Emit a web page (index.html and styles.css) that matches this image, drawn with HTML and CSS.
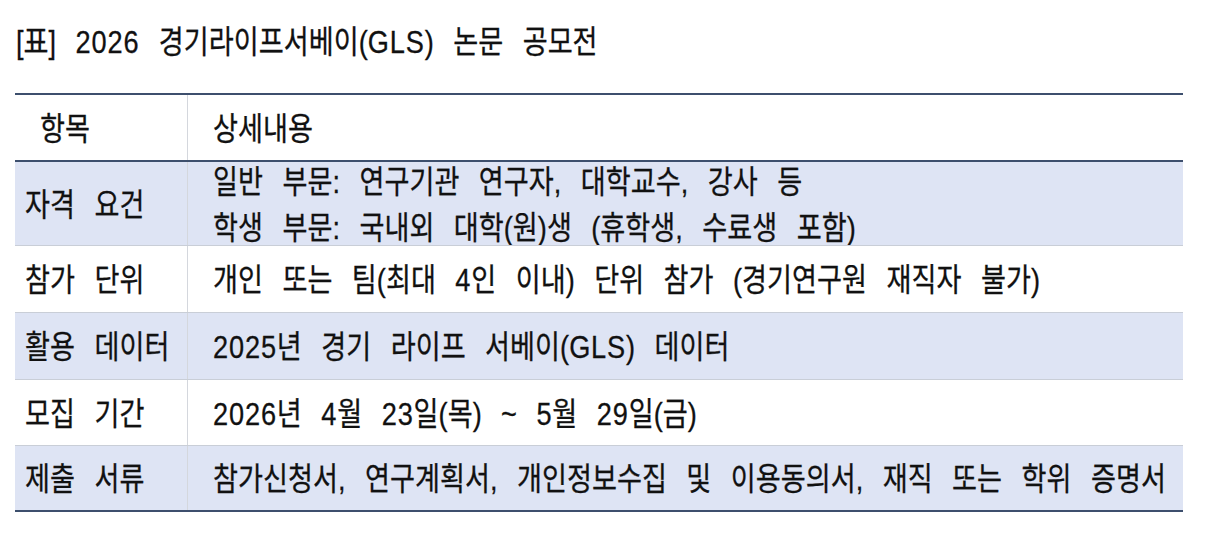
FILE: index.html
```html
<!DOCTYPE html>
<html lang="ko">
<head>
<meta charset="utf-8">
<title>2026 경기라이프서베이(GLS) 논문 공모전</title>
<link rel="stylesheet" href="styles.css">
</head>
<body>
<div class="page">
  <h1 class="title"><span class="t">[표] <span class="n">2026</span> 경기라이프서베이(<span class="n">GLS</span>) 논문 공모전</span></h1>
  <div class="tbl">
    <div class="row head">
      <div class="lab"><span class="t">항목</span></div>
      <div class="val"><span class="t">상세내용</span></div>
    </div>
    <div class="row shade r1">
      <div class="lab"><span class="t">자격 요건</span></div>
      <div class="val two">
        <span class="t">일반 부문: 연구기관 연구자, 대학교수, 강사 등</span>
        <span class="t">학생 부문: 국내외 대학(원)생 (휴학생, 수료생 포함)</span>
      </div>
    </div>
    <div class="row r2">
      <div class="lab"><span class="t">참가 단위</span></div>
      <div class="val"><span class="t">개인 또는 팀(최대 <span class="n">4</span>인 이내) 단위 참가 (경기연구원 재직자 불가)</span></div>
    </div>
    <div class="row shade r3">
      <div class="lab"><span class="t">활용 데이터</span></div>
      <div class="val"><span class="t"><span class="n">2025</span>년 경기 라이프 서베이(<span class="n">GLS</span>) 데이터</span></div>
    </div>
    <div class="row r4">
      <div class="lab"><span class="t">모집 기간</span></div>
      <div class="val"><span class="t"><span class="n">2026</span>년 <span class="n">4</span>월 <span class="n">23</span>일(목) ~ <span class="n">5</span>월 <span class="n">29</span>일(금)</span></div>
    </div>
    <div class="row shade r5">
      <div class="lab"><span class="t">제출 서류</span></div>
      <div class="val"><span class="t">참가신청서, 연구계획서, 개인정보수집 및 이용동의서, 재직 또는 학위 증명서</span></div>
    </div>
  </div>
</div>
</body>
</html>
```

FILE: styles.css
```css
* {
  box-sizing: border-box;
}

html, body {
  margin: 0;
  padding: 0;
  background: #ffffff;
}

body {
  width: 1206px;
  height: 540px;
  overflow: hidden;
  font-family: "Liberation Sans", "Noto Sans CJK KR", sans-serif;
  color: #111111;
}

.t {
  display: inline-block;
  font-size: 32px;
  font-weight: 400;
  line-height: 36px;
  white-space: nowrap;
  word-spacing: 14px;
  -webkit-text-stroke: 0.3px currentColor;
  transform: scaleX(0.849);
  transform-origin: 0 50%;
}

.n {
  letter-spacing: 1px;
}

.title {
  margin: 0;
  height: 93px;
  padding: 24px 0 0 16px;
  font-weight: normal;
  font-size: 32px;
  line-height: 36px;
  overflow: hidden;
}

.tbl {
  margin-left: 15px;
  width: 1168px;
  border-top: 2px solid #3d4f6d;
  border-bottom: 2px solid #3d4f6d;
}

.row {
  display: grid;
  grid-template-columns: 173px minmax(0, 1fr);
  border-bottom: 1px solid #c9ced7;
}

.row:last-child {
  border-bottom: none;
}

.shade {
  background: #dee4f4;
}

.head {
  height: 67px;
  border-bottom: 2px solid #3d4f6d;
}

.r1 { height: 84px; }
.r2 { height: 67px; }
.r3 { height: 67px; }
.r4 { height: 66px; }
.r5 { height: 64px; }

.lab {
  display: flex;
  align-items: center;
  padding: 2px 0 0 10px;
  border-right: 1px solid #d4d7dd;
  overflow: hidden;
}

.head .lab {
  padding-left: 25px;
}

.val {
  display: flex;
  flex-direction: column;
  justify-content: center;
  align-items: flex-start;
  padding: 2px 0 0 25px;
  min-width: 0;
  overflow: hidden;
}

.two {
  gap: 10px;
}
```
